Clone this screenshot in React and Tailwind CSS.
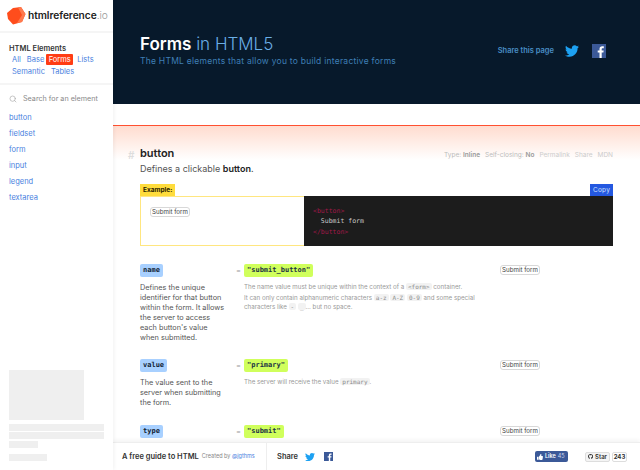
import { FaTwitter, FaGithub, FaThumbsUp } from "react-icons/fa";
import { Search } from "lucide-react";

const elements = ["button", "fieldset", "form", "input", "legend", "textarea"];

const Code = ({ children }) => (
  <code className="rounded-[2px] bg-[#f2f2f2] px-[2px] font-['DejaVu_Sans_Mono',monospace] text-[6px] text-[#8a8a8a]">
    {children}
  </code>
);

const SubmitButton = () => (
  <button className="block h-[8px] w-[38px] box-content rounded-[3px] border border-[#d8d8d8] bg-white text-center text-[6.2px] leading-[8px] text-[#444]">
    Submit form
  </button>
);

const Logo = () => (
  <svg width="19" height="18" viewBox="0 0 19 18">
    <path d="M6 1 L14 0 L18.5 7 L15 15 L6 17.5 L1 12 L0 6 Z" fill="#ff4d1c" />
    <path d="M11 0.5 L14 0 L18.5 7 L15 15 L10 16 L15 8 Z" fill="#ff7a4d" />
  </svg>
);

const FacebookSquare = ({ size }) => (
  <svg width={size} height={size} viewBox="0 0 14 14">
    <rect width="14" height="14" fill="#3b5998" />
    <path d="M9.7 14 V8.6 H11.4 L11.7 6.5 H9.7 V5.2 C9.7 4.6 9.9 4.2 10.7 4.2 H11.8 V2.3 C11.6 2.3 11 2.2 10.2 2.2 C8.6 2.2 7.5 3.2 7.5 5 V6.5 H5.7 V8.6 H7.5 V14 Z" fill="#fff" />
  </svg>
);

const Sidebar = () => (
  <aside className="z-10 flex h-full w-[113px] shrink-0 flex-col bg-white shadow-[1px_0_4px_rgba(0,0,0,0.06)]">
    <div className="flex h-[33px] items-center gap-[2px] border-b-2 border-[#f5f5f5] pl-[7px]">
      <Logo />
      <span className="text-[10.2px] font-semibold tracking-[-0.05px] text-[#222]">
        htmlreference<span className="font-light text-[#999]">.io</span>
      </span>
    </div>
    <div className="h-[52px] border-b-2 border-[#f5f5f5] pl-[9px] pt-[11px]">
      <div className="text-[7.5px] font-semibold leading-[9px] text-[#333]">HTML Elements</div>
      <div className="mt-[1px] flex flex-wrap items-center pl-[3px] text-[7.5px] leading-[11px] text-[#4a7fe0]">
        <span>All</span>
        <span className="ml-[6px]">Base</span>
        <span className="ml-[2px] w-[27px] rounded-[1px] bg-[#ff3c14] text-center text-white">Forms</span>
        <span className="ml-[4px]">Lists</span>
        <span className="mt-[1px]">Semantic</span>
        <span className="ml-[6px] mt-[1px]">Tables</span>
      </div>
    </div>
    <div className="flex items-center gap-[6px] pl-[9px] pt-[8px] text-[7.2px] text-[#888]">
      <Search size={8} className="text-[#aaa]" />
      <span className="leading-[11px]">Search for an element</span>
    </div>
    <ul className="mt-[6px] pl-[9px] text-[7.5px] leading-[16px] text-[#4a7fe0]">
      {elements.map((el) => (
        <li key={el}>{el}</li>
      ))}
    </ul>
    <div className="mt-auto pb-[9px] pl-[9px]">
      <div className="h-[50px] w-[75px] bg-[#efefef]" />
      <div className="mt-[4px] h-[7px] w-[95px] bg-[#efefef]" />
      <div className="mt-px h-[7px] w-[95px] bg-[#efefef]" />
      <div className="mt-[2px] h-[7px] w-[29px] bg-[#efefef]" />
      <div className="mt-[6px] h-[7px] w-[38px] bg-[#efefef]" />
    </div>
  </aside>
);

const Hero = () => (
  <header className="flex h-[104px] items-center justify-between bg-[#07192b] pb-[4px] pl-[27px] pr-[34px]">
    <div>
      <h1 className="text-[17px] leading-[22px] text-[#6aaee6]">
        <span className="font-semibold text-white">Forms</span> <span className="font-light">in HTML5</span>
      </h1>
      <p className="text-[8.5px] leading-[12px] tracking-[0.25px] text-[#3f7fb5]">
        The HTML elements that allow you to build interactive forms
      </p>
    </div>
    <div className="mt-[1px] flex items-center">
      <span className="mr-[11px] text-[7.5px] font-semibold text-[#4a8fc7]">Share this page</span>
      <FaTwitter className="mr-[13px] text-[14px] text-[#1da1f2]" />
      <FacebookSquare size={14} />
    </div>
  </header>
);

const Attr = ({ name, value, children, desc, height }) => (
  <div className={`flex ${height}`}>
    <div className="w-[97px] shrink-0">
      <span className="block w-fit rounded-[2px] bg-[#a8d0ff] px-[3px] font-['DejaVu_Sans_Mono',monospace] text-[7px] font-bold leading-[13px] text-[#123]">
        {name}
      </span>
      {desc && <p className="mt-[6px] w-[88px] text-[7.3px] leading-[10px] text-[#555]">{desc}</p>}
    </div>
    <div className="flex-1">
      <div className="flex items-center justify-between pr-[100px]">
        <div className="flex items-center">
          <span className="-ml-px w-[8px] text-[7.5px] text-[#999]">=</span>
          <span className="block rounded-[2px] bg-[#d0ff5c] px-[3px] font-['DejaVu_Sans_Mono',monospace] text-[7px] font-bold leading-[13px] text-[#234]">
            {value}
          </span>
        </div>
        <SubmitButton />
      </div>
      {children}
    </div>
  </div>
);

const Attributes = () => (
  <div className="mt-[18px] flex flex-col">
    <Attr
      name="name"
      value={'"submit_button"'}
      height="h-[95px]"
      desc="Defines the unique identifier for that button within the form. It allows the server to access each button's value when submitted."
    >
      <div className="ml-[7px] mt-[6px] w-[235px] text-[6.2px] leading-[8.5px] text-[#999]">
        <p>The name value must be unique within the context of a <Code>{"<form>"}</Code> container.</p>
        <p className="mt-[3px]">
          It can only contain alphanumeric characters <Code>a-z</Code> <Code>A-Z</Code> <Code>0-9</Code> and some special characters like <Code>-</Code> <Code>_</Code>... but no space.
        </p>
      </div>
    </Attr>
    <Attr
      name="value"
      value={'"primary"'}
      height="h-[66px]"
      desc="The value sent to the server when submitting the form."
    >
      <div className="ml-[7px] mt-[6px] text-[6.2px] leading-[8.5px] text-[#999]">
        The server will receive the value <Code>primary</Code>.
      </div>
    </Attr>
    <Attr name="type" value={'"submit"'} height="h-[14px]" />
  </div>
);

const Example = () => (
  <div className="relative mt-[9px] w-[473px]">
    <div className="flex items-end justify-between">
      <span className="bg-[#ffdc3c] px-[3px] text-[6.5px] font-bold leading-[12px] text-[#2a2200]">Example:</span>
      <span className="bg-[#2458e0] px-[3px] text-[6.5px] leading-[12px] tracking-[0.2px] text-[#cfe0ff]">Copy</span>
    </div>
    <div className="flex h-[50px]">
      <div className="w-[164px] border border-r-0 border-[#ffe680] bg-white pl-[9px] pt-[10px]">
        <SubmitButton />
      </div>
      <pre className="flex-1 bg-[#1c1c1c] pl-[9px] pt-[10px] font-['DejaVu_Sans_Mono',monospace] text-[6.5px] leading-[10.5px] text-[#c8c8c8]">
        <span className="text-[#a01848]">{"<button>"}</span>{"\n  Submit form\n"}<span className="text-[#a01848]">{"</button>"}</span>
      </pre>
    </div>
  </div>
);

const Footer = () => (
  <footer className="absolute bottom-0 left-[113px] right-0 flex h-[28px] items-center border-t border-[#eee] bg-white shadow-[0_-2px_4px_rgba(0,0,0,0.05)]">
    <div className="flex h-full w-[154px] items-center gap-[3px] border-r border-[#eee] pl-[9px]">
      <span className="whitespace-nowrap text-[7.5px] font-semibold text-[#333]">A free guide to HTML</span>
      <span className="whitespace-nowrap text-[5.5px] text-[#888]">Created by <span className="text-[#4a7fe0]">@jgthms</span></span>
    </div>
    <div className="flex items-center pl-[10px]">
      <span className="mr-[7px] text-[7.5px] font-semibold text-[#333]">Share</span>
      <FaTwitter className="mr-[9px] text-[10px] text-[#1da1f2]" />
      <FacebookSquare size={9} />
    </div>
    <div className="ml-auto flex items-center pr-[13px]">
      <span className="mr-[17px] flex h-[11px] w-[33px] items-center gap-[2px] rounded-[2px] bg-[#3b5998] pl-[2px] text-[5.5px] font-semibold text-white">
        <FaThumbsUp className="text-[6px]" /> Like <span className="font-normal text-[#cdd7ee]">45</span>
      </span>
      <span className="flex h-[10px] w-[25px] items-center gap-[2px] rounded-[2px] border border-[#ddd] bg-[#f4f4f4] px-[2px] text-[6px] font-semibold text-[#333]">
        <FaGithub className="text-[7px]" /> Star
      </span>
      <span className="ml-[2px] flex h-[10px] w-[15px] items-center justify-center rounded-[2px] border border-[#ddd] text-[6px] font-bold text-[#333]">243</span>
    </div>
  </footer>
);

export default function App() {
  return (
    <div className="relative flex h-[470px] w-[640px] overflow-hidden bg-white font-['Inter',sans-serif]">
      <Sidebar />
      <main className="flex-1 overflow-hidden">
        <Hero />
        <div className="mt-[21px] border-t border-[#ff5030] bg-gradient-to-b from-[#ffdccf] to-white to-[34px] pl-[27px] pt-[21px]">
          <div className="relative">
            <span className="absolute left-[-12px] top-[1px] text-[10px] font-semibold text-[#ddd]">#</span>
            <div className="flex items-baseline justify-between pr-[27px]">
              <h2 className="text-[11px] font-semibold leading-[13px] text-[#222]">button</h2>
              <div className="flex gap-[5px] text-[6.5px] text-[#bbb]">
                <span>Type: <b className="font-semibold text-[#999]">Inline</b></span>
                <span>Self-closing: <b className="font-semibold text-[#999]">No</b></span>
                <span className="text-[#ccc]">Permalink</span>
                <span className="text-[#ccc]">Share</span>
                <span className="text-[#ccc]">MDN</span>
              </div>
            </div>
            <p className="mt-[2px] text-[9px] leading-[12px] text-[#555]">
              Defines a clickable <b className="font-semibold text-[#222]">button</b>.
            </p>
          </div>
          <Example />
          <Attributes />
        </div>
      </main>
      <Footer />
    </div>
  );
}
